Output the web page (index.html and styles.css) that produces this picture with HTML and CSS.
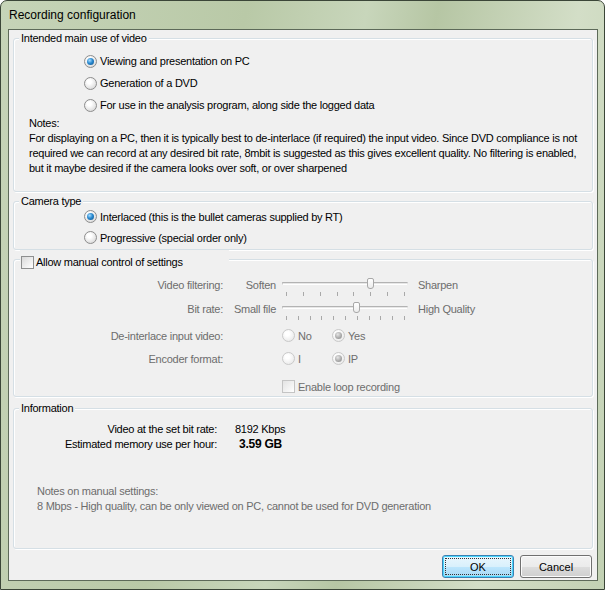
FILE: index.html
```html
<!DOCTYPE html>
<html lang="en">
<head>
    <meta charset="UTF-8">
    <title>Recording configuration</title>
    <link rel="stylesheet" href="styles.css">
</head>
<body>
    <div class="window">
        <div class="titlebar">Recording configuration</div>
        <div class="client">

            <fieldset class="group use-group">
                <legend>Intended main use of video</legend>
                <div class="options">
                    <label class="option"><span class="radio checked"></span>Viewing and presentation on PC</label>
                    <label class="option"><span class="radio"></span>Generation of a DVD</label>
                    <label class="option"><span class="radio"></span>For use in the analysis program, along side the logged data</label>
                </div>
                <div class="notes">
                    <div>Notes:</div>
                    <p>For displaying on a PC, then it is typically best to de-interlace (if required) the input video. Since DVD compliance is not<br>
                    required we can record at any desired bit rate, 8mbit is suggested as this gives excellent quality. No filtering is enabled,<br>
                    but it maybe desired if the camera looks over soft, or over sharpened</p>
                </div>
            </fieldset>

            <fieldset class="group camera-group">
                <legend>Camera type</legend>
                <div class="options tight">
                    <label class="option"><span class="radio checked"></span>Interlaced (this is the bullet cameras supplied by RT)</label>
                    <label class="option"><span class="radio"></span>Progressive (special order only)</label>
                </div>
            </fieldset>

            <fieldset class="group manual-group">
                <legend class="check-legend"><span class="checkbox"></span>Allow manual control of settings</legend>
                <div class="settings disabled">
                    <div class="slider-row">
                        <span class="field-label">Video filtering:</span>
                        <span class="lo">Soften</span>
                        <div class="slider">
                            <div class="track"></div>
                            <div class="ticks">
                                <i></i><i></i><i></i><i></i><i></i><i></i><i></i><i></i>
                            </div>
                            <span class="thumb" style="left: 85px"></span>
                        </div>
                        <span class="hi">Sharpen</span>
                    </div>
                    <div class="slider-row">
                        <span class="field-label">Bit rate:</span>
                        <span class="lo">Small file</span>
                        <div class="slider">
                            <div class="track"></div>
                            <div class="ticks">
                                <i></i><i></i><i></i><i></i><i></i><i></i><i></i><i></i><i></i><i></i><i></i>
                            </div>
                            <span class="thumb" style="left: 71px"></span>
                        </div>
                        <span class="hi">High Quality</span>
                    </div>
                    <div class="choice-row first">
                        <span class="field-label">De-interlace input video:</span>
                        <div class="choices">
                            <label class="choice"><span class="radio"></span>No</label>
                            <label class="choice"><span class="radio checked"></span>Yes</label>
                        </div>
                    </div>
                    <div class="choice-row">
                        <span class="field-label">Encoder format:</span>
                        <div class="choices">
                            <label class="choice"><span class="radio"></span>I</label>
                            <label class="choice"><span class="radio checked"></span>IP</label>
                        </div>
                    </div>
                    <div class="loop-row">
                        <label class="choice"><span class="checkbox"></span>Enable loop recording</label>
                    </div>
                </div>
            </fieldset>

            <fieldset class="group info-group">
                <legend>Information</legend>
                <div class="info">
                    <div class="info-row">
                        <span class="info-label">Video at the set bit rate:</span>
                        <span class="info-value">8192 Kbps</span>
                    </div>
                    <div class="info-row">
                        <span class="info-label">Estimated memory use per hour:</span>
                        <span class="info-value big">3.59 GB</span>
                    </div>
                </div>
                <p class="manual-notes">Notes on manual settings:<br>
                8 Mbps - High quality, can be only viewed on PC, cannot be used for DVD generation</p>
            </fieldset>

            <div class="buttons">
                <button class="button default"><span>OK</span></button>
                <button class="button">Cancel</button>
            </div>
        </div>
    </div>
</body>
</html>
```

FILE: styles.css
```css
/* Vista style dialog */
body {
    margin: 0;
    width: 605px;
    height: 590px;
    overflow: hidden;
    background: #ffffff;
    font-family: "Liberation Sans", Arial, sans-serif;
    font-size: 11px;
    letter-spacing: -0.25px;
    color: #000;
}
.window {
    box-sizing: border-box;
    width: 605px;
    height: 590px;
    border: 1px solid #3b4638;
    border-radius: 7px 7px 0 0;
    padding: 0 6px 8px 7px;
    background: linear-gradient(100deg, #c6d4b8 0%, #b9c9a7 35%, #c8d6bb 52%, #b6c6a4 62%, #d3dec7 82%, #c2d1b3 100%);
    display: flex;
    flex-direction: column;
}
.titlebar {
    height: 28px;
    line-height: 28px;
    padding-left: 1px;
    font-size: 12px;
    letter-spacing: 0;
    color: #000;
}
.client {
    flex: 1;
    border: 1px solid #5d6a59;
    background: #f0f0f0;
    padding: 0 4px;
    display: flex;
    flex-direction: column;
}

/* group boxes */
.group {
    box-sizing: border-box;
    margin: 0;
    padding: 0;
    border: 1px solid #d5dfe5;
    border-radius: 3px;
    box-shadow: 1px 1px 0 #ffffff, inset 1px 1px 0 #ffffff;
    min-width: 0;
}
.group legend {
    margin-left: 5px;
    padding: 0 2px;
    line-height: 13px;
    background: #f0f0f0;
}
.use-group { margin-top: 2px; height: 160px; }
.camera-group { margin-top: 3px; height: 55px; }
.manual-group { height: 147px; }
.info-group { margin-top: 5px; height: 147px; }

/* radios and checkboxes */
.radio {
    position: relative;
    box-sizing: border-box;
    flex: none;
    width: 13px;
    height: 13px;
    border: 1px solid #8d8d8d;
    border-radius: 50%;
    background: radial-gradient(circle at 40% 35%, #ffffff 20%, #d4d4d4 90%);
}
.radio.checked::after {
    content: "";
    position: absolute;
    left: 2px;
    top: 2px;
    width: 7px;
    height: 7px;
    border-radius: 50%;
    background: radial-gradient(circle at 38% 35%, #a8dcff 0%, #2a8ad0 45%, #0f4f86 100%);
}
.checkbox {
    box-sizing: border-box;
    flex: none;
    width: 13px;
    height: 13px;
    border: 1px solid #8e8f8f;
    background: linear-gradient(135deg, #d9d9d9 0%, #f4f4f4 70%, #ffffff 100%);
}
.option, .choice {
    display: flex;
    align-items: center;
    gap: 3px;
}

/* intended use */
.options {
    padding: 5px 0 0 70px;
}
.options .option {
    height: 22px;
}
.options.tight {
    padding-top: 0;
    margin-top: -2px;
}
.options.tight .option {
    height: 21px;
}
.notes {
    padding-left: 15px;
    line-height: 15px;
    white-space: nowrap;
}
.notes p {
    margin: 0;
}

/* manual settings */
.check-legend.check-legend {
    display: flex;
    align-items: center;
    gap: 2px;
    margin-left: 6px;
    padding: 6px 46px 0 1px;
    height: 13px;
}
.settings {
    padding-top: 4px;
    color: #6d6d6d;
}
.field-label {
    flex: none;
    width: 209px;
    text-align: right;
}
.slider-row {
    display: flex;
    align-items: center;
    height: 24px;
}
.lo {
    flex: none;
    width: 53px;
    margin-right: 6px;
    text-align: right;
}
.hi {
    margin-left: 10px;
}
.slider {
    position: relative;
    flex: none;
    width: 126px;
    height: 24px;
}
.track {
    box-sizing: border-box;
    margin-top: 9px;
    height: 3px;
    border-top: 1px solid #b3b3b3;
    border-left: 1px solid #c8c8c8;
    border-right: 1px solid #e4e4e4;
    background: #e7e7e7;
    border-bottom: 1px solid #ffffff;
}
.ticks {
    display: flex;
    justify-content: space-between;
    margin: 7px 3px 0 4px;
}
.ticks i {
    width: 1px;
    height: 4px;
    background: #a9a9a9;
}
.thumb {
    position: absolute;
    top: 5px;
    box-sizing: border-box;
    width: 7px;
    height: 11px;
    border: 1px solid #a8a8a8;
    border-radius: 2px 2px 3px 3px;
    background: linear-gradient(#ffffff, #ececec);
}
.choice-row {
    display: flex;
    align-items: center;
    height: 23px;
}
.choice-row.first {
    margin-top: 3px;
}
.choices {
    display: flex;
    margin-left: 59px;
}
.choices .choice {
    width: 50px;
}
.disabled .radio {
    border-color: #c9c9c9;
    background: radial-gradient(circle at 40% 35%, #ffffff 20%, #e6e6e6 90%);
}
.disabled .radio.checked::after {
    background: radial-gradient(circle at 40% 35%, #e6e6e6 0%, #a6a6a6 60%, #8a8a8a 100%);
}
.disabled .checkbox {
    border-color: #c4c4c4;
    background: linear-gradient(135deg, #e3e3e3 0%, #f6f6f6 70%, #ffffff 100%);
}
.loop-row {
    display: flex;
    align-items: center;
    height: 23px;
    margin-top: 5px;
    padding-left: 268px;
}

/* information */
.info {
    padding-top: 6px;
}
.info-row {
    display: flex;
    align-items: center;
    height: 15px;
}
.info-label {
    flex: none;
    width: 203px;
    text-align: right;
}
.info-value {
    margin-left: 18px;
}
.info-value.big {
    margin-left: 22px;
    font-size: 12px;
    font-weight: bold;
}
.manual-notes {
    margin: 33px 0 0;
    padding-left: 23px;
    line-height: 15px;
    color: #6d6d6d;
}

/* buttons */
.buttons {
    display: flex;
    justify-content: flex-end;
    gap: 6px;
    margin: 6px 1px 0 0;
}
.button {
    box-sizing: border-box;
    width: 72px;
    height: 23px;
    padding: 0;
    border: 1px solid #707070;
    border-radius: 3px;
    font: 11px "Liberation Sans", Arial, sans-serif;
    color: #000;
    background: linear-gradient(#f2f2f2 0%, #ebebeb 50%, #dddddd 50%, #cfcfcf 100%);
    box-shadow: inset 0 0 0 1px #fcfcfc;
}
.button.default {
    border-color: #3c7fb1;
    background: linear-gradient(#eaf6fd 0%, #d9f0fc 50%, #bee6fd 50%, #a7d9f5 100%);
    box-shadow: inset 0 0 0 1px #48d6fd;
    padding: 2px;
}
.button.default span {
    display: flex;
    align-items: center;
    justify-content: center;
    height: 100%;
    border: 1px dotted #333;
    box-sizing: border-box;
}
```
